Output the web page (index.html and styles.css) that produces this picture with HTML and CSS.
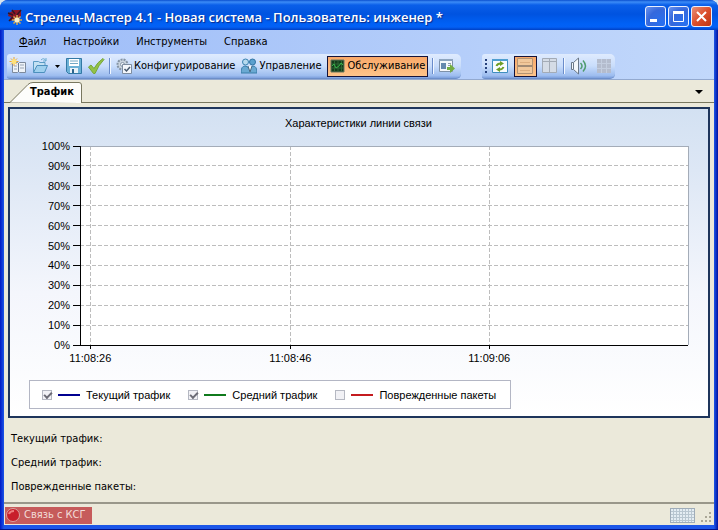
FILE: index.html
```html
<!DOCTYPE html>
<html lang="ru">
<head>
<meta charset="utf-8">
<title>Стрелец-Мастер 4.1</title>
<link rel="stylesheet" href="styles.css">
</head>
<body>
<div class="window">
  <header class="titlebar">
    <svg class="app-icon" width="16" height="16" viewBox="0 0 16 16" aria-hidden="true">
      <path d="M2 4 7 1h7v6l-4 3-8 2 2-4-3-1z" fill="#8d1725"/><path d="M1 4l5 2M2 12l4-4M5 1l3 4M14 1l-4 5" stroke="#351524" stroke-width="1.5"/>
      <path d="M10 6v10M5 11h10M6.5 7.5l7 7M13.5 7.5l-7 7" stroke="#d9ad4c" stroke-width="1.5"/><circle cx="10" cy="11" r="2.5" fill="#f7f0cd"/>
    </svg>
    <h1 class="title">Стрелец-Мастер 4.1 - Новая система - Пользователь: инженер *</h1>
    <div class="window-buttons">
      <button class="win-btn" type="button" aria-label="Свернуть"><svg width="19" height="19" viewBox="0 0 19 19"><path d="M4 13.5h7" stroke="#fff" stroke-width="3"/></svg></button>
      <button class="win-btn" type="button" aria-label="Развернуть"><svg width="19" height="19" viewBox="0 0 19 19"><path d="M4.500 5v9.500h10V5" fill="none" stroke="#fff"/><path d="M4 5.500h11" stroke="#fff" stroke-width="3"/></svg></button>
      <button class="win-btn close" type="button" aria-label="Закрыть"><svg width="19" height="19" viewBox="0 0 19 19"><path d="M5 5l9 9M14 5l-9 9" stroke="#fff" stroke-width="2"/></svg></button>
    </div>
  </header>

  <div class="client">
    <div class="bars">
      <nav class="menu">
        <button type="button"><u>Ф</u>айл</button>
        <button type="button">Настройки</button>
        <button type="button">Инструменты</button>
        <button type="button">Справка</button>
      </nav>
      <div class="toolbars">
        <div class="toolbar main-tools">
          <button type="button" class="tool" aria-label="Создать"><svg width="18" height="18" viewBox="0 0 18 18"><path d="M3.500 5.500v10h5l1-1 1 1h6v-10h-6l-1 1-1-1z" fill="#eef3f8" stroke="#7d8a9c"/><path d="M5 9h3M5 12h3M11 8h4M11 11h4" stroke="#9aa5b5"/><path d="M9.500 6v9" stroke="#6d7a90"/><path d="M5 0v9M.5 4.500h9M2 1.500l6 6M8 1.500l-6 6" stroke="#e9a43a"/><circle cx="5" cy="4.500" r="2.500" fill="#ffe278"/></svg></button>
          <button type="button" class="tool" aria-label="Открыть"><svg width="18" height="18" viewBox="0 0 18 18"><path d="M2.500 15V4.500h5l1.500 1h5V8" fill="#c4e1f3" stroke="#5b9bc4"/><path d="M2.500 15.500 6 8.500h10.500l-3 7z" fill="#9fd0ee" stroke="#4c8fbd"/><path d="M10 3q3-3 5 1m0-3v3h-3" fill="none" stroke="#6babd0"/></svg></button>
          <button type="button" class="tool caret" aria-label="Последние файлы"><svg width="5" height="3" viewBox="0 0 5 3"><path d="M0 0h5L2.500 3z"/></svg></button>
          <button type="button" class="tool" aria-label="Сохранить"><svg width="18" height="18" viewBox="0 0 18 18"><path d="M1.500 1.500h15v15h-13l-2-2z" fill="#6cb1d6" stroke="#3279a5"/><path d="M4 2h10v7H4z" fill="#fff"/><path d="M5 4h8M5 6.500h8" stroke="#73a8c5"/><path d="M5 11h8v5H5z" fill="#e9f2f8"/><path d="M7 12h2v4H7z" fill="#2d668d"/></svg></button>
          <button type="button" class="tool" aria-label="Применить"><svg width="18" height="18" viewBox="0 0 18 18"><path d="M1.500 10 4 8l3 3.500Q10.500 5 16 1.500l1 1Q11.500 8 8 16.500H6.500z" fill="#93c247" stroke="#76a637"/></svg></button>
          <span class="sep"></span>
          <button type="button" class="mode"><svg width="16" height="16" viewBox="0 0 16 16"><circle cx="6.500" cy="6.500" r="5" fill="#cbd5df" stroke="#8594a4" stroke-width="2" stroke-dasharray="2 1"/><circle cx="6.500" cy="6.500" r="2" fill="#f2f6fa" stroke="#8897a8"/><path d="M6.500 6.500h9v9h-9z" fill="#f4f7fb" stroke="#7e8da0"/><path d="M8.500 11l2 2 3.500-4" fill="none" stroke="#46576b" stroke-width="1.5"/></svg>Конфигурирование</button>
          <button type="button" class="mode"><svg width="16" height="16" viewBox="0 0 16 16"><path d="M0 15q0-7 4-7 3 0 4 3 1-3 4-3 4 0 4 7z" fill="#6aa9d2" stroke="#397da9"/><circle cx="4.500" cy="4" r="3" fill="#b7daee" stroke="#3981b0"/><circle cx="11.500" cy="4" r="3" fill="#5ba1cf" stroke="#3374a3"/><path d="M7 8l2 6 2-6" fill="#f5f8fa" stroke="#4a6c86"/></svg>Управление</button>
          <button type="button" class="mode pressed"><svg width="16" height="16" viewBox="0 0 16 16"><path d="M1 2h13v12H1z" fill="#123d1b" stroke="#687a61"/><path d="M4.500 3v10M8 3v10M11.500 3v10M2 6h11M2 10h11" stroke="#2d6634"/><path d="M2 8l2-2 2 4 3-2 2-3 2 2" fill="none" stroke="#36b34a"/></svg>Обслуживание</button>
          <span class="sep"></span>
          <button type="button" class="tool" aria-label="Выполнить"><svg width="18" height="18" viewBox="0 0 18 18"><path d="M1.500 2.500h13v12h-13z" fill="#f5f8fb" stroke="#7e91a9"/><path d="M1 3h14" stroke="#8ea5bf" stroke-width="2"/><path d="M3 6h5v6H3z" fill="#6689ad"/><path d="M10 6.500h3M10 8.500h2" stroke="#8d9caf"/><path d="M9 10h3V7l5 4.500-5 4.500v-3H9z" fill="#74ad43"/></svg></button>
        </div>
        <div class="toolbar view-tools">
          <span class="grip"></span>
          <button type="button" class="tool" aria-label="Обновить"><svg width="18" height="18" viewBox="0 0 18 18"><path d="M1.500 2.500h15v13h-15z" fill="#f8fcff" stroke="#3f8ebf"/><path d="M1 3h16" stroke="#4f9ed0" stroke-width="2"/><path d="M5.500 9q1-2.500 4-2.500M12.500 10q-1 2.500-4 2.500" fill="none" stroke="#6f9e27" stroke-width="2"/><path d="M9 4l4 2.500L9 9zM9 10v5l-4-2.500z" fill="#6f9e27"/></svg></button>
          <button type="button" class="tool pressed" aria-label="По горизонтали"><svg width="18" height="18" viewBox="0 0 18 18"><path d="M1.500 1.500h15v15h-15z" fill="#f1c89b" stroke="#b39474"/><path d="M2 9h14" stroke="#a18a74" stroke-width="2"/><path d="M4 5.500h10M4 13.500h10" stroke="#dcae80"/></svg></button>
          <button type="button" class="tool" aria-label="По вертикали"><svg width="18" height="18" viewBox="0 0 18 18"><path d="M1.500 1.500h14v14h-14z" fill="#d5dce6" stroke="#a3abb6"/><path d="M8.500 2v13M2 4.500h13" stroke="#a3abb6"/></svg></button>
          <span class="sep"></span>
          <button type="button" class="tool" aria-label="Звук"><svg width="18" height="18" viewBox="0 0 18 18"><path d="M1.500 5.500h2l5-4.500v16l-5-4.500h-2z" fill="#f3f7fb" stroke="#6a7889"/><path d="M3.500 6v6" stroke="#6a7889"/><path d="M10.500 6q3 3 0 6M13 3.500q5 5.500 0 11" fill="none" stroke="#4f9c6f" stroke-width="1.5"/></svg></button>
          <button type="button" class="tool" disabled aria-label="Таблица"><svg width="18" height="18" viewBox="0 0 18 18"><path d="M2 2h14v14H2z" fill="#b4bccd"/><path d="M2 6.500h14M2 11.500h14M6.500 2v14M11.500 2v14" stroke="#c4cedf"/></svg></button>
        </div>
      </div>
    </div>

    <div class="tabs" role="tablist">
      <button class="tab" type="button" role="tab" aria-selected="true">
        <svg class="tab-shape" width="72" height="21" viewBox="0 0 72 21" aria-hidden="true"><path d="M0 20.500 18 2.500Q20 .5 23 .5H69Q71.500 .5 71.500 3V21" fill="#fdfdfb" stroke="#78775f"/></svg>
        <span>Трафик</span>
      </button>
      <button class="tab-list" type="button" aria-label="Список вкладок"><svg width="8" height="4" viewBox="0 0 8 4"><path d="M0 0h8L4 4z"/></svg></button>
    </div>

    <main class="page">
      <section class="chart">
        <h2 class="chart-title">Характеристики линии связи</h2>
        <svg class="plot" role="img" aria-label="Характеристики линии связи">
          <rect width="100%" height="100%" fill="#fff"/>
          <g class="grid">
            <line x2="100%" y1="10%" y2="10%"/><line x2="100%" y1="20%" y2="20%"/><line x2="100%" y1="30%" y2="30%"/>
            <line x2="100%" y1="40%" y2="40%"/><line x2="100%" y1="50%" y2="50%"/><line x2="100%" y1="60%" y2="60%"/>
            <line x2="100%" y1="70%" y2="70%"/><line x2="100%" y1="80%" y2="80%"/><line x2="100%" y1="90%" y2="90%"/>
            <line x1="1.7%" x2="1.7%" y2="100%"/><line x1="34.6%" x2="34.6%" y2="100%"/><line x1="67.3%" x2="67.3%" y2="100%"/>
          </g>
          <line class="edge" x2="100%"/><line class="edge" x1="100%" x2="100%" y2="100%"/>
          <g class="axis">
            <line y2="100%"/><line y1="100%" y2="100%" x2="100%"/>
            <line x1="-7"/><line x1="-7" y1="10%" y2="10%"/><line x1="-7" y1="20%" y2="20%"/><line x1="-7" y1="30%" y2="30%"/>
            <line x1="-7" y1="40%" y2="40%"/><line x1="-7" y1="50%" y2="50%"/><line x1="-7" y1="60%" y2="60%"/><line x1="-7" y1="70%" y2="70%"/>
            <line x1="-7" y1="80%" y2="80%"/><line x1="-7" y1="90%" y2="90%"/><line x1="-7" y1="100%" y2="100%"/>
          </g>
          <g class="axis x-ticks"><line x1="1.7%" x2="1.7%" y1="98%" y2="100%"/><line x1="34.6%" x2="34.6%" y1="98%" y2="100%"/><line x1="67.3%" x2="67.3%" y1="98%" y2="100%"/></g>
          <g class="y-labels">
            <text x="-10" y="0" dy="4">100%</text><text x="-10" y="10%" dy="4">90%</text><text x="-10" y="20%" dy="4">80%</text>
            <text x="-10" y="30%" dy="4">70%</text><text x="-10" y="40%" dy="4">60%</text><text x="-10" y="50%" dy="4">50%</text>
            <text x="-10" y="60%" dy="4">40%</text><text x="-10" y="70%" dy="4">30%</text><text x="-10" y="80%" dy="4">20%</text>
            <text x="-10" y="90%" dy="4">10%</text><text x="-10" y="100%" dy="4">0%</text>
          </g>
          <g class="x-labels">
            <text x="1.7%" y="100%" dy="17">11:08:26</text><text x="34.6%" y="100%" dy="17">11:08:46</text><text x="67.3%" y="100%" dy="17">11:09:06</text>
          </g>
        </svg>
        <div class="legend">
          <label><input type="checkbox" checked><span class="swatch blue"></span>Текущий трафик</label>
          <label><input type="checkbox" checked><span class="swatch green"></span>Средний трафик</label>
          <label><input type="checkbox"><span class="swatch red"></span>Поврежденные пакеты</label>
        </div>
      </section>
      <div class="readings">
        <p>Текущий трафик:</p>
        <p>Средний трафик:</p>
        <p>Поврежденные пакеты:</p>
      </div>
    </main>

    <footer class="status">
      <span class="link-state"><svg width="16" height="16" viewBox="0 0 16 16" aria-hidden="true"><circle cx="8" cy="8" r="6.500" fill="#c81f2b" stroke="#d9a3a0"/><path d="M4 7q1-3 5-3" fill="none" stroke="#ee7d7d" stroke-width="2"/></svg>Связь с КСГ</span>
      <span class="keyboard"></span>
      <svg class="resize" width="12" height="12" viewBox="0 0 12 12" aria-hidden="true"><path d="M8 0h2v2H8zM4 4h2v2H4zM8 4h2v2H8zM0 8h2v2H0zM4 8h2v2H4zM8 8h2v2H8z" fill="#aaa797"/></svg>
    </footer>
  </div>
</div>
</body>
</html>
```
FILE: styles.css
```css
* { box-sizing: border-box; }

body {
  margin: 0;
  background: #d8e4ee;
  color: #000;
  font: 11px/16px "DejaVu Sans Condensed", "Noto Sans", sans-serif;
}

button {
  display: flex;
  align-items: center;
  margin: 0;
  padding: 0;
  border: 0;
  background: none;
  color: inherit;
  font: inherit;
}

svg { display: block; flex: none; }

.window {
  display: flex;
  flex-direction: column;
  min-height: 100vh;
  padding: 0 4px 4px;
  border-radius: 8px 8px 0 0;
  background: linear-gradient(90deg, #0019c4, #1c56e8 4px, #1c56e8 calc(100% - 4px), #0012a0);
  border-bottom: 1px solid #00138c;
  overflow: hidden;
}

.titlebar {
  display: flex;
  align-items: center;
  gap: 2px;
  height: 30px;
  margin: 0 -4px;
  padding: 3px 6px 0 7px;
  background: linear-gradient(#0a4fcf 0, #3c8cf7 2px, #0a5fe9 5px, #0053e0 14px, #0061f6 24px, #0360f5 27px, #0040c4 30px);
}

.title {
  flex: 1;
  margin: 0;
  color: #fff;
  font-family: "Open Sans", sans-serif;
  font-size: 13px;
  font-weight: 600;
  line-height: 18px;
  white-space: nowrap;
  text-shadow: 1px 1px 1px #0a2a88;
}

.window-buttons { display: flex; gap: 2px; }

.win-btn {
  justify-content: center;
  width: 21px;
  height: 21px;
  border: 1px solid #e8efff;
  border-radius: 3px;
  background: radial-gradient(circle at 85% 85%, #2870f0, #3568dc 60%, #6c94ee);
}

.win-btn.close { background: linear-gradient(135deg, #e99078, #dc4f2c 50%, #bd3512); }

.client {
  display: flex;
  flex: 1;
  flex-direction: column;
  background: #ebe9da;
}

.bars {
  background: linear-gradient(90deg, #9dbcf8, #c2d8fb);
  border-bottom: 1px solid #93a9cf;
}

.menu {
  display: flex;
  gap: 17px;
  height: 24px;
  padding-left: 15px;
}

.toolbars { display: flex; gap: 21px; padding-left: 3px; }

.toolbar {
  display: flex;
  align-items: center;
  height: 25px;
  border-bottom: 1px solid #6d8fc9;
  border-radius: 3px 5px 5px 3px;
  background: linear-gradient(#dfebfe, #c9ddfb 50%, #9dbdef 90%, #7c9fdc);
}

.main-tools { width: 454px; padding-left: 2px; gap: 4px; }
.view-tools { width: 133px; padding-left: 3px; }

.tool { justify-content: center; width: 18px; height: 21px; }
.main-tools .caret { width: 8px; }

.view-tools { gap: 2px; }
.view-tools .tool { width: 23px; }

.mode { gap: 2px; height: 21px; padding: 0 1px; }
.mode.pressed { padding: 0 2px; }

.pressed, .view-tools .pressed {
  border: 1px solid #14143c;
  background: linear-gradient(#f9a869, #fdc58a);
}

.sep { width: 2px; height: 16px; border-left: 1px solid #6a8ccb; border-right: 1px solid #f1f7ff; }

.grip {
  width: 2px;
  height: 14px;
  background: repeating-linear-gradient(#27417c 0 2px, transparent 2px 4px);
}

.tabs {
  display: flex;
  align-items: flex-end;
  justify-content: space-between;
  height: 23px;
  padding: 0 11px 0 6px;
  border-bottom: 1px solid #78775f;
}

.tab {
  position: relative;
  width: 72px;
  height: 20px;
  padding-left: 20px;
  font-weight: bold;
}

.tab-shape { position: absolute; inset: 0 auto auto 0; }
.tab span { position: relative; }
.tab-list { height: 20px; }

.page {
  display: flex;
  flex: 1;
  flex-direction: column;
  padding: 4px 4px 3px;
}

.chart {
  display: flex;
  flex: 1;
  flex-direction: column;
  padding: 6px 20px 7px 19px;
  border: 2px solid #1e355b;
  background: linear-gradient(#d3e1f2, #dde7f5 20%, #f4f6fc 60%, #fff);
  font-family: "Liberation Sans", sans-serif;
}

.chart-title {
  margin: 0 0 15px;
  font-size: 11px;
  font-weight: normal;
  text-align: center;
}

.plot {
  flex: 1;
  width: calc(100% - 51px);
  min-height: 120px;
  margin: 0 0 35px 51px;
  overflow: visible;
}

.grid line { stroke: #bdbdbd; stroke-dasharray: 4 2; shape-rendering: crispEdges; }
.axis line { stroke: #000; shape-rendering: crispEdges; }
.edge { stroke: #a4acb8; shape-rendering: crispEdges; }
.x-ticks { transform: translateY(4px); }
.y-labels { text-anchor: end; }
.x-labels { text-anchor: middle; }

.legend {
  display: flex;
  align-self: flex-start;
  align-items: center;
  gap: 18px;
  height: 29px;
  padding: 0 14px 0 12px;
  border: 1px solid #b3b6c4;
  background: #fff;
}

.legend label { display: flex; align-items: center; }

.legend input {
  appearance: none;
  width: 10px;
  height: 10px;
  margin: 0 6px 0 0;
  border: 1px solid #b5b8c2;
  background: #f1f1f5;
}

.legend input:checked::before {
  content: "";
  display: block;
  width: 6px;
  height: 3px;
  margin: 1px;
  border: solid #6b6b75;
  border-width: 0 0 2px 2px;
  transform: rotate(-45deg);
}

.swatch { width: 22px; height: 2px; margin-right: 6px; }
.blue { background: #000090; }
.green { background: #107a1c; }
.red { background: #c41b1f; }

.readings { padding: 13px 3px 0; }
.readings p { margin: 0 0 8px; }
.readings p:last-child { margin: 0 0 4px; }

.status {
  display: flex;
  align-items: center;
  height: 23px;
  padding: 2px 1px 1px;
  border-top: 2px solid #99978a;
}

.link-state {
  display: flex;
  align-items: center;
  gap: 3px;
  height: 17px;
  padding-right: 6px;
  background: #c65b5b;
  color: #f3dcd8;
}

.keyboard {
  width: 25px;
  height: 15px;
  margin: 0 6px 0 auto;
  border: 1px solid #9facb8;
  background: repeating-linear-gradient(90deg, transparent 0 2px, #b8c6d0 2px 3px), repeating-linear-gradient(#e4edf3 0 2px, #b8c6d0 2px 3px);
}

.resize { align-self: flex-end; }
```
